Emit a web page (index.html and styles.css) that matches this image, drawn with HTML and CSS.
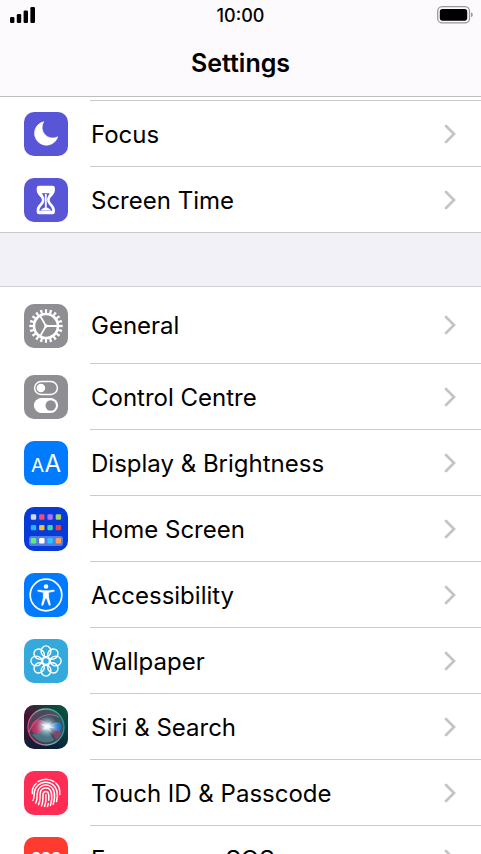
FILE: index.html
```html
<!DOCTYPE html>
<html lang="en-GB">
<head>
<meta charset="utf-8">
<meta name="viewport" content="width=device-width, initial-scale=1">
<title>Settings</title>
<link rel="stylesheet" href="styles.css">
</head>
<body>
<svg class="defs" width="0" height="0" aria-hidden="true">
  <defs>
    <symbol id="chevron" viewBox="0 0 12 20"><path d="M2 2l8 8-8 8" fill="none" stroke="currentColor" stroke-width="2.7" stroke-linecap="round" stroke-linejoin="miter"/></symbol>
    <g id="petal"><ellipse cx="22" cy="12.3" rx="4.9" ry="5.4"/></g>
    <linearGradient id="siri-bg" x1="0" y1="0" x2="1" y2="1"><stop offset="0" stop-color="#5d0b32"/><stop offset=".45" stop-color="#1b1d36"/><stop offset="1" stop-color="#041b3d"/></linearGradient>
    <linearGradient id="siri-green" x1="1" y1="0" x2=".3" y2=".6"><stop offset="0" stop-color="#075a40"/><stop offset="1" stop-color="#075a40" stop-opacity="0"/></linearGradient>
    <linearGradient id="siri-ring" x1="0" y1=".6" x2="1" y2=".4"><stop offset="0" stop-color="#e0406c"/><stop offset=".5" stop-color="#7fb5a8"/><stop offset="1" stop-color="#1b9c9b"/></linearGradient>
    <radialGradient id="siri-glow"><stop offset="0" stop-color="#fff"/><stop offset=".25" stop-color="#e8fbff" stop-opacity=".8"/><stop offset="1" stop-color="#87b8d8" stop-opacity="0"/></radialGradient>
    <linearGradient id="siri-pink" x1="0" y1="0" x2="1" y2="0"><stop offset="0" stop-color="#d21d58"/><stop offset="1" stop-color="#c68fb0"/></linearGradient>
    <linearGradient id="siri-blue" x1="0" y1="0" x2="1" y2="0"><stop offset="0" stop-color="#9cecff"/><stop offset="1" stop-color="#116dce"/></linearGradient>
  </defs>
</svg>
<div class="screen">
  <header class="top">
    <div class="status">
      <svg class="signal" viewBox="0 0 26 16" role="img" aria-label="Signal strength"><rect x="0" y="10" width="4.4" height="6" rx="1.2"/><rect x="6.8" y="7" width="4.4" height="9" rx="1.2"/><rect x="13.6" y="3.5" width="4.4" height="12.5" rx="1.2"/><rect x="20.4" y="0" width="4.6" height="16" rx="1.2"/></svg>
      <time class="clock">10:00</time>
      <svg class="battery" viewBox="0 0 36 18" role="img" aria-label="Battery full"><rect x=".7" y=".7" width="31.8" height="16.2" rx="4.5" fill="none" stroke="#99979a" stroke-width="1.3"/><rect x="2.8" y="3" width="27.4" height="11.7" rx="2.7"/><path d="M34 6.3q1.8.8 1.8 2.5T34 11.3z" fill="#99979a"/></svg>
    </div>
    <h1 class="title">Settings</h1>
  </header>
  <main>
    <ul class="group group-scrolled">
      <li><a class="row" href="#focus">
        <svg class="icon indigo" viewBox="0 0 44 44" aria-hidden="true"><path fill="#fff" stroke="#fff" stroke-width=".6" stroke-linejoin="round" d="M19.7 9.7A11.9 11.9 0 1 0 33.8 24.8A10.7 10.7 0 0 1 19.7 9.7z"/></svg>
        <span class="cell"><span class="label">Focus</span><svg class="chevron" aria-hidden="true"><use href="#chevron"/></svg></span></a></li>
      <li><a class="row" href="#screen-time">
        <svg class="icon indigo" viewBox="0 0 44 44" aria-hidden="true"><path fill="#fff" d="M15 7.7h13.6q2.3 0 2.3 2.2v2c0 5-5.2 6.700-5.2 10.100s5.200 5.100 5.200 10.100v2q0 2.200-2.300 2.200H15q-2.300 0-2.300-2.200v-2c0-5 5.200-6.700 5.200-10.100s-5.200-5.100-5.200-10.100v-2q0-2.200 2.300-2.200z"/><path fill="#5856d6" d="M17.700 15.300h8.200c-1.500 2.200-2.800 4-2.800 6.700s1.800 4.500 3.500 6.500c.900 1.300 1.600 2.400 1.600 4.300H15.400c0-1.900.7-3 1.600-4.300 1.700-2 3.500-3.800 3.500-6.500s-1.300-4.500-2.800-6.700z"/><path fill="#fff" d="M20.900 16h1.800v13.400c1.800.5 3.500 1.500 4.400 3.200H16.500c.9-1.700 2.600-2.700 4.400-3.200z"/></svg>
        <span class="cell"><span class="label">Screen Time</span><svg class="chevron" aria-hidden="true"><use href="#chevron"/></svg></span></a></li>
    </ul>
    <ul class="group">
      <li><a class="row row-tall" href="#general">
        <svg class="icon gray" viewBox="0 0 44 44" aria-hidden="true"><g fill="none" stroke="#fff"><circle cx="22" cy="22" r="14.700" stroke-width="4" pathLength="200" stroke-dasharray="4.800 5.200" stroke-dashoffset="2.400"/><circle cx="22" cy="22" r="12" stroke-width="2.600"/><path stroke-width="1.800" d="M22 22h11.500M22 22l-5.700-9.900M22 22l-5.700 9.900"/></g><circle cx="22" cy="22" r="1.800" fill="#fff"/></svg>
        <span class="cell"><span class="label">General</span><svg class="chevron" aria-hidden="true"><use href="#chevron"/></svg></span></a></li>
      <li><a class="row" href="#control-centre">
        <svg class="icon gray" viewBox="0 0 44 44" aria-hidden="true"><rect x="10.600" y="6.600" width="22.800" height="12.800" rx="6.400" fill="none" stroke="#fff" stroke-width="1.500"/><circle cx="16.900" cy="13" r="4.300" fill="#fff"/><rect x="9.900" y="23" width="24.200" height="15" rx="7.500" fill="#fff"/><circle cx="26.700" cy="30.500" r="5.200" fill="#8e8e93"/></svg>
        <span class="cell"><span class="label">Control Centre</span><svg class="chevron" aria-hidden="true"><use href="#chevron"/></svg></span></a></li>
      <li><a class="row" href="#display">
        <svg class="icon blue" viewBox="0 0 44 44" aria-hidden="true"><text class="glyph" x="13.500" y="31" font-size="19">A</text><text class="glyph" x="28.800" y="31" font-size="24">A</text></svg>
        <span class="cell"><span class="label">Display &amp; Brightness</span><svg class="chevron" aria-hidden="true"><use href="#chevron"/></svg></span></a></li>
      <li><a class="row" href="#home-screen">
        <svg class="icon royal" viewBox="0 0 44 44" aria-hidden="true"><rect x="5" y="29" width="34" height="10" rx="2.500" fill="#567bdf"/>
          <g><rect x="6.800" y="7.300" width="5.400" height="5.400" rx="1.200" fill="#d3d9e3"/><rect x="15.100" y="7.300" width="5.400" height="5.400" rx="1.200" fill="#f34c73"/><rect x="23.400" y="7.300" width="5.400" height="5.400" rx="1.200" fill="#b36dff"/><rect x="31.700" y="7.300" width="5.400" height="5.400" rx="1.200" fill="#a3d65c"/>
          <rect x="6.800" y="17.900" width="5.400" height="5.400" rx="1.200" fill="#27b5fa"/><rect x="15.100" y="17.900" width="5.400" height="5.400" rx="1.200" fill="#fcc220"/><rect x="23.400" y="17.900" width="5.400" height="5.400" rx="1.200" fill="#3fd4ae"/><rect x="31.700" y="17.900" width="5.400" height="5.400" rx="1.200" fill="#f03d3c"/>
          <rect x="6.800" y="31.100" width="5.400" height="5.400" rx="1.200" fill="#5deb83"/><rect x="15.100" y="31.100" width="5.400" height="5.400" rx="1.200" fill="#fff"/><rect x="23.400" y="31.100" width="5.400" height="5.400" rx="1.200" fill="#2cc5fb"/><rect x="31.700" y="31.100" width="5.400" height="5.400" rx="1.200" fill="#f7a158"/></g></svg>
        <span class="cell"><span class="label">Home Screen</span><svg class="chevron" aria-hidden="true"><use href="#chevron"/></svg></span></a></li>
      <li><a class="row" href="#accessibility">
        <svg class="icon blue" viewBox="0 0 44 44" aria-hidden="true"><circle cx="22" cy="22" r="15.800" fill="none" stroke="#fff" stroke-width="1.700"/><circle cx="22" cy="13.500" r="2.300" fill="#fff"/><path fill="#fff" stroke="#fff" stroke-width=".3" stroke-linejoin="round" d="M14.600 16.900l5.400.7h4l5.400-.7q1.200 0 1.200.8t-1 .9l-4.800 1v4.600l1.700 7.200q.2.900-.6 1.100t-1.100-.6L22.500 25.500h-1l-2.300 6.400q-.3.800-1.100.6t-.6-1.100l1.700-7.200v-4.600l-4.800-1q-1-.2-1-.9t1.200-.8z"/></svg>
        <span class="cell"><span class="label">Accessibility</span><svg class="chevron" aria-hidden="true"><use href="#chevron"/></svg></span></a></li>
      <li><a class="row" href="#wallpaper">
        <svg class="icon cyan" viewBox="0 0 44 44" aria-hidden="true"><g fill="none" stroke="#fff" stroke-width="1.400"><use href="#petal"/><use href="#petal" transform="rotate(45 22 22)"/><use href="#petal" transform="rotate(90 22 22)"/><use href="#petal" transform="rotate(135 22 22)"/><use href="#petal" transform="rotate(180 22 22)"/><use href="#petal" transform="rotate(225 22 22)"/><use href="#petal" transform="rotate(270 22 22)"/><use href="#petal" transform="rotate(315 22 22)"/><circle cx="22" cy="22" r="3.400"/></g></svg>
        <span class="cell"><span class="label">Wallpaper</span><svg class="chevron" aria-hidden="true"><use href="#chevron"/></svg></span></a></li>
      <li><a class="row" href="#siri">
        <svg class="icon" viewBox="0 0 44 44" aria-hidden="true"><path fill="url(#siri-bg)" d="M0 0h44v44H0z"/><path fill="url(#siri-green)" d="M0 0h44v44H0z"/><circle cx="22" cy="22" r="17.500" fill="#6b6580" fill-opacity=".5"/><circle cx="22" cy="22" r="18" fill="none" stroke="url(#siri-ring)" stroke-width="1.300"/><path fill="url(#siri-pink)" fill-opacity=".8" d="M25 21C21 16 16 13 11 15.500 5 18 6 28 12 29c5 1.200 7-5.500 13-8z"/><path fill="url(#siri-blue)" fill-opacity=".85" d="M22 21c6-1 8-5 13-3.500 4 2 4 8-1 9-4 .5-7-4-12-5.500z"/><path fill="#64d2c9" fill-opacity=".35" d="M22 22c-3 6-8 8-14 7 5 8 15 11 22 6z"/><path fill="#b14372" fill-opacity=".55" d="M25 22l7 13c3-2 5-5 6-8z"/><path d="M5 27C11 12 23 6 35 12" fill="none" stroke="#ea7998" stroke-opacity=".65"/><circle cx="23" cy="21.500" r="11" fill="url(#siri-glow)"/><path d="M16 18.500l7 1.500 4-3-2 4 6 1.500-6 .5 3 5-5-4-5 1 3-3z" fill="#fff" fill-opacity=".6"/></svg>
        <span class="cell"><span class="label">Siri &amp; Search</span><svg class="chevron" aria-hidden="true"><use href="#chevron"/></svg></span></a></li>
      <li><a class="row" href="#touch-id">
        <svg class="icon pink" viewBox="0 0 44 44" aria-hidden="true"><g fill="none" stroke="#fff" stroke-width="1.500" stroke-linecap="round"><path d="M14 10.600q8-4.800 16 0"/><path d="M8.300 22.500c-.3-4.200 1-7.600 4-10"/><path d="M31.800 12c3 2.700 4.500 6.500 3.900 11.500"/><path d="M9 29.500c1.700-3 .8-6 1.300-8.600C12.500 8.800 29.500 8 32.800 19.500c.9 3.400.6 7.500-.3 11"/><path d="M11.700 32c2-3.500 1.200-6.500 1.600-9.700.9-10 14.500-11.500 16.900-1.200.8 4 .2 8.500-1 12.200"/><path d="M14.500 33.700c2.100-3.700 1.400-7.100 1.600-10.500.2-7.600 9.800-8.600 11.300-1.200.8 4 .3 8.300-.9 12.400"/><path d="M17.500 35c2-4 1.400-7.700 1.500-11.500.2-4 5-4.100 5.600-.3.300 2 .3 4 .1 6M24.300 32.500l-.8 3"/><path d="M21.900 23.800c.4 4 .1 7.900-1.300 11.600"/></g></svg>
        <span class="cell"><span class="label">Touch ID &amp; Passcode</span><svg class="chevron" aria-hidden="true"><use href="#chevron"/></svg></span></a></li>
      <li><a class="row" href="#sos">
        <svg class="icon red" viewBox="0 0 44 44" aria-hidden="true"><text class="glyph glyph-bold" x="22" y="26" font-size="14">SOS</text></svg>
        <span class="cell"><span class="label">Emergency SOS</span><svg class="chevron" aria-hidden="true"><use href="#chevron"/></svg></span></a></li>
    </ul>
  </main>
</div>
</body>
</html>
```
FILE: styles.css
```css
* { box-sizing: border-box; }

body {
  margin: 0;
  background: #f2f1f7;
  color: #000;
  font-family: Inter, "Liberation Sans", sans-serif;
}

.defs { display: block; }

.screen {
  height: 100vh;
  overflow: hidden;
}

.top {
  background: #fcfafc;
  border-bottom: 1px solid #bfbec1;
}

.status {
  display: grid;
  grid-template-columns: 1fr auto 1fr;
  align-items: center;
  height: 30px;
  padding: 0 8px;
}

.signal { width: 26px; height: 16px; margin-left: 2px; }
.battery { width: 36px; height: 18px; justify-self: end; }

.clock {
  padding-top: 2px;
  font-size: 18px;
  font-weight: 500;
  line-height: 28px;
}

.title {
  margin: 0;
  padding: 17px 0;
  font-size: 25px;
  font-weight: 600;
  line-height: 32px;
  text-align: center;
}

.group {
  margin: 0;
  padding: 0;
  list-style: none;
  background: #fff;
  border-top: 1px solid #d0d0d3;
  border-bottom: 1px solid #c9c9cc;
}

.group + .group { margin-top: 53px; }

.group-scrolled {
  padding-top: 3px;
  border-top: 0;
}

.group-scrolled::before {
  content: "";
  display: block;
  height: 1px;
  margin-left: 90px;
  background: #cbcbcd;
}

.row {
  display: flex;
  align-items: stretch;
  gap: 22px;
  height: 66px;
  padding-left: 24px;
  color: inherit;
  text-decoration: none;
}

.row-tall { height: 77px; }

.icon {
  flex: none;
  align-self: center;
  width: 44px;
  height: 44px;
  border-radius: 10px;
}

.cell {
  display: flex;
  flex: 1;
  align-items: center;
  justify-content: space-between;
  padding-right: 25px;
  border-bottom: 1px solid #cbcbcd;
}

li:last-child .row { height: 65px; }
li:last-child .cell { border-bottom: 0; }

.label {
  padding: 2px 0 0 1px;
  font-size: 24px;
  line-height: 32px;
}

.chevron {
  width: 12px;
  height: 20px;
  color: #c4c4c7;
}

.indigo { background: #5856d6; }
.gray { background: #8e8e93; }
.blue { background: #007aff; }
.royal { background: #063bd7; }
.cyan { background: #34aadc; }
.pink { background: #ff2d55; }
.red { background: #ff3b30; }

.glyph {
  fill: #fff;
  text-anchor: middle;
}

.glyph-bold { font-weight: 700; }
```
